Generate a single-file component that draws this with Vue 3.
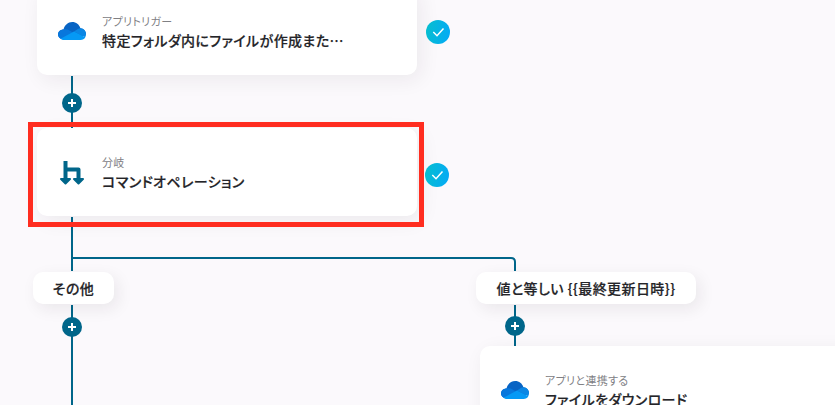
<template>
  <main class="canvas">
    <svg class="lines" width="835" height="405" fill="none" stroke="#00668a" stroke-width="2">
      <path d="M72 76V128M72 217V271M72 305V405" />
      <path d="M72 258H511Q515 258 515 262V271M515 305V346" />
    </svg>

    <section
      v-for="card in cards"
      :key="card.title"
      class="card"
      :style="{ left: card.x + 'px', top: card.y + 'px' }"
    >
      <svg v-if="card.icon === 'cloud'" class="icon" viewBox="0 0 28 28">
        <path d="M2.500 21.500C1 20.500 0 19 0 17.500c0-2.800 2.300-5 5.500-5C6.500 8.200 10 5 14.200 5c4 0 7 2.500 8.200 6.200 3.300.3 5.600 2.700 5.600 6L22 21z" fill="#0864c4" />
        <path d="M5.200 12.600c2.500-.6 4.600-.2 6.800 1.100l4.500 2.700L3 22C1 21 0 19.500 0 17.600c0-2.600 2.200-4.800 5.200-5z" fill="#0877dc" />
        <path d="M16 14.500l3.500-2.300c.9-.7 1.900-1 2.900-1 3.200.2 5.600 2.700 5.600 6 0 1.200-.3 2.200-.9 3.100z" fill="#0a86e4" />
        <path d="M2.500 21.700L16 14.500 27.300 20.300C26.400 22 24.600 23 22.500 23H6c-1.400 0-2.500-.4-3.500-1.300z" fill="#0599f5" />
      </svg>
      <svg v-else class="icon" viewBox="0 0 28 28">
        <path d="M7.500 3V20M7.500 11.500H20.500V20" fill="none" stroke="#00668a" stroke-width="4" stroke-linejoin="round" />
        <path d="M3 21H12L7.500 25.500zM16 21H25L20.500 25.500z" fill="#00668a" stroke="#00668a" stroke-width="2" stroke-linejoin="round" />
      </svg>
      <div class="text">
        <p class="kind">{{ card.kind }}</p>
        <p class="title">{{ card.title }}</p>
      </div>
    </section>

    <div
      v-for="label in labels"
      :key="label.text"
      class="label"
      :style="{ left: label.x + 'px', width: label.width + 'px' }"
    >{{ label.text }}</div>

    <button
      v-for="(p, i) in pluses"
      :key="'plus' + i"
      class="plus"
      :style="{ left: p.x + 'px', top: p.y + 'px' }"
    >
      <svg width="20" height="20" viewBox="0 0 20 20">
        <path d="M10 6v8M6 10h8" stroke="#fff" stroke-width="2" />
      </svg>
    </button>

    <div class="highlight"></div>

    <span
      v-for="(c, i) in checks"
      :key="'check' + i"
      class="check"
      :style="{ left: c.x + 'px', top: c.y + 'px' }"
    >
      <svg width="24" height="24" viewBox="0 0 24 24">
        <path d="M7.300 12l3.700 3.700L17.500 8.400" fill="none" stroke="#fff" stroke-width="1.500" />
      </svg>
    </span>
  </main>
</template>

<script setup>
const cards = [
  { x: 37, y: -13, icon: 'cloud', kind: 'アプリトリガー', title: '特定フォルダ内にファイルが作成また…' },
  { x: 37, y: 128, icon: 'branch', kind: '分岐', title: 'コマンドオペレーション' },
  { x: 480, y: 346, icon: 'cloud', kind: 'アプリと連携する', title: 'ファイルをダウンロード' }
]

const labels = [
  { x: 33, width: 81, text: 'その他' },
  { x: 476, width: 220, text: '値と等しい {{最終更新日時}}' }
]

const pluses = [
  { x: 62, y: 93 },
  { x: 62, y: 317 },
  { x: 505, y: 316 }
]

const checks = [
  { x: 426, y: 20 },
  { x: 425, y: 163 }
]
</script>

<style>
body {
  margin: 0;
  overflow: hidden;
}
</style>

<style scoped>
.canvas {
  position: relative;
  width: 835px;
  height: 405px;
  overflow: hidden;
  background: #fbf9fc;
  color: #242428;
  font-family: "Noto Sans CJK JP", sans-serif;
  font-feature-settings: "palt";
}

.lines {
  position: absolute;
  left: 0;
  top: 0;
}

.card {
  position: absolute;
  box-sizing: border-box;
  display: flex;
  align-items: center;
  gap: 16px;
  width: 380px;
  height: 88px;
  padding: 0 21px;
  border-radius: 10px;
  background: #fff;
  box-shadow: 4px 5px 20px rgba(40, 30, 40, 0.07);
}

.icon {
  flex: none;
  width: 28px;
  height: 28px;
}

.text {
  padding-top: 2px;
  white-space: nowrap;
}

.kind,
.title {
  margin: 0;
}

.kind {
  font-size: 11px;
  line-height: 17px;
  letter-spacing: 0.33px;
  color: #808084;
}

.title {
  font-size: 14px;
  line-height: 21px;
  font-weight: 500;
  letter-spacing: 0.42px;
  -webkit-text-stroke: 0.2px currentColor;
}

.label {
  position: absolute;
  top: 272px;
  height: 32px;
  border-radius: 10px;
  background: #fff;
  box-shadow: 4px 5px 16px rgba(40, 30, 40, 0.08);
  font-size: 14px;
  line-height: 32px;
  font-weight: 500;
  letter-spacing: 0.42px;
  -webkit-text-stroke: 0.2px currentColor;
  text-align: center;
  white-space: nowrap;
}

.plus {
  position: absolute;
  width: 20px;
  height: 20px;
  padding: 0;
  border: 0;
  border-radius: 50%;
  background: #00668a;
}

.plus svg,
.check svg {
  display: block;
}

.highlight {
  position: absolute;
  left: 28px;
  top: 122px;
  box-sizing: border-box;
  width: 396px;
  height: 105px;
  border: 5px solid #ff2d20;
}

.check {
  position: absolute;
  width: 24px;
  height: 24px;
  border-radius: 50%;
  background: linear-gradient(100deg, #06bfcd, #04a9f8);
}
</style>
